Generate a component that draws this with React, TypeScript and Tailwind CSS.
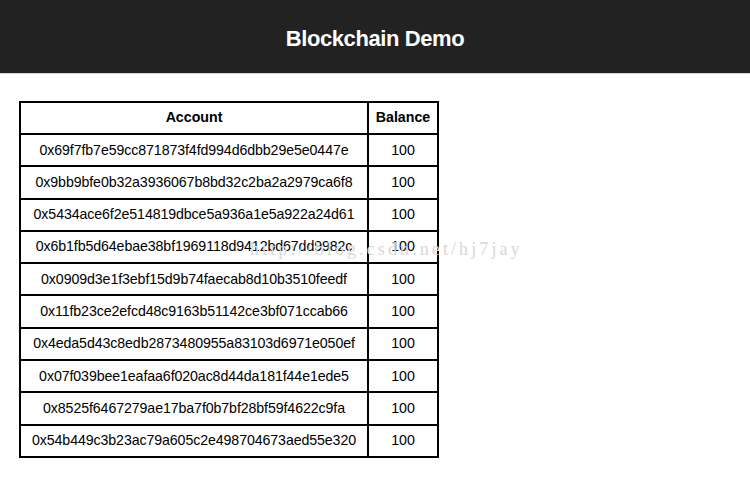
import React from 'react';

const accounts = [
  '0x69f7fb7e59cc871873f4fd994d6dbb29e5e0447e',
  '0x9bb9bfe0b32a3936067b8bd32c2ba2a2979ca6f8',
  '0x5434ace6f2e514819dbce5a936a1e5a922a24d61',
  '0x6b1fb5d64ebae38bf1969118d9412bd67dd9982c',
  '0x0909d3e1f3ebf15d9b74faecab8d10b3510feedf',
  '0x11fb23ce2efcd48c9163b51142ce3bf071ccab66',
  '0x4eda5d43c8edb2873480955a83103d6971e050ef',
  '0x07f039bee1eafaa6f020ac8d44da181f44e1ede5',
  '0x8525f6467279ae17ba7f0b7bf28bf59f4622c9fa',
  '0x54b449c3b23ac79a605c2e498704673aed55e320',
];

const App = () => {
  return (
    <div className="relative min-h-[483px] bg-white font-['Liberation_Sans',Arial,sans-serif] text-black">
      {/* Header */}
      <header className="h-[74px] bg-[#222222] border-b border-[#d4d4d4] flex items-center justify-center pt-[4px]">
        <h1 className="text-[22px] font-bold text-white tracking-[-0.4px]">Blockchain Demo</h1>
      </header>

      {/* Accounts table */}
      <div className="pl-[19px] pt-[27px]">
        <table className="border-collapse border-2 border-black w-[420px] text-[14.2px]">
          <thead>
            <tr className="h-[32px]">
              <th className="w-[348px] border-2 border-black font-bold text-center">Account</th>
              <th className="border-2 border-black font-bold text-center">Balance</th>
            </tr>
          </thead>
          <tbody>
            {accounts.map((acc) => (
              <tr key={acc} className="h-[32.3px]">
                <td className="border-2 border-black text-center tracking-[-0.1px]">{acc}</td>
                <td className="border-2 border-black text-center">100</td>
              </tr>
            ))}
          </tbody>
        </table>
      </div>

      {/* watermark */}
      <div className="absolute left-[250px] top-[236px] text-[18px] tracking-[3.1px] text-[#d8d8d8] font-['Liberation_Serif',serif] pointer-events-none">
        http://blog.csdn.net/hj7jay
      </div>
    </div>
  );
};

export default App;
